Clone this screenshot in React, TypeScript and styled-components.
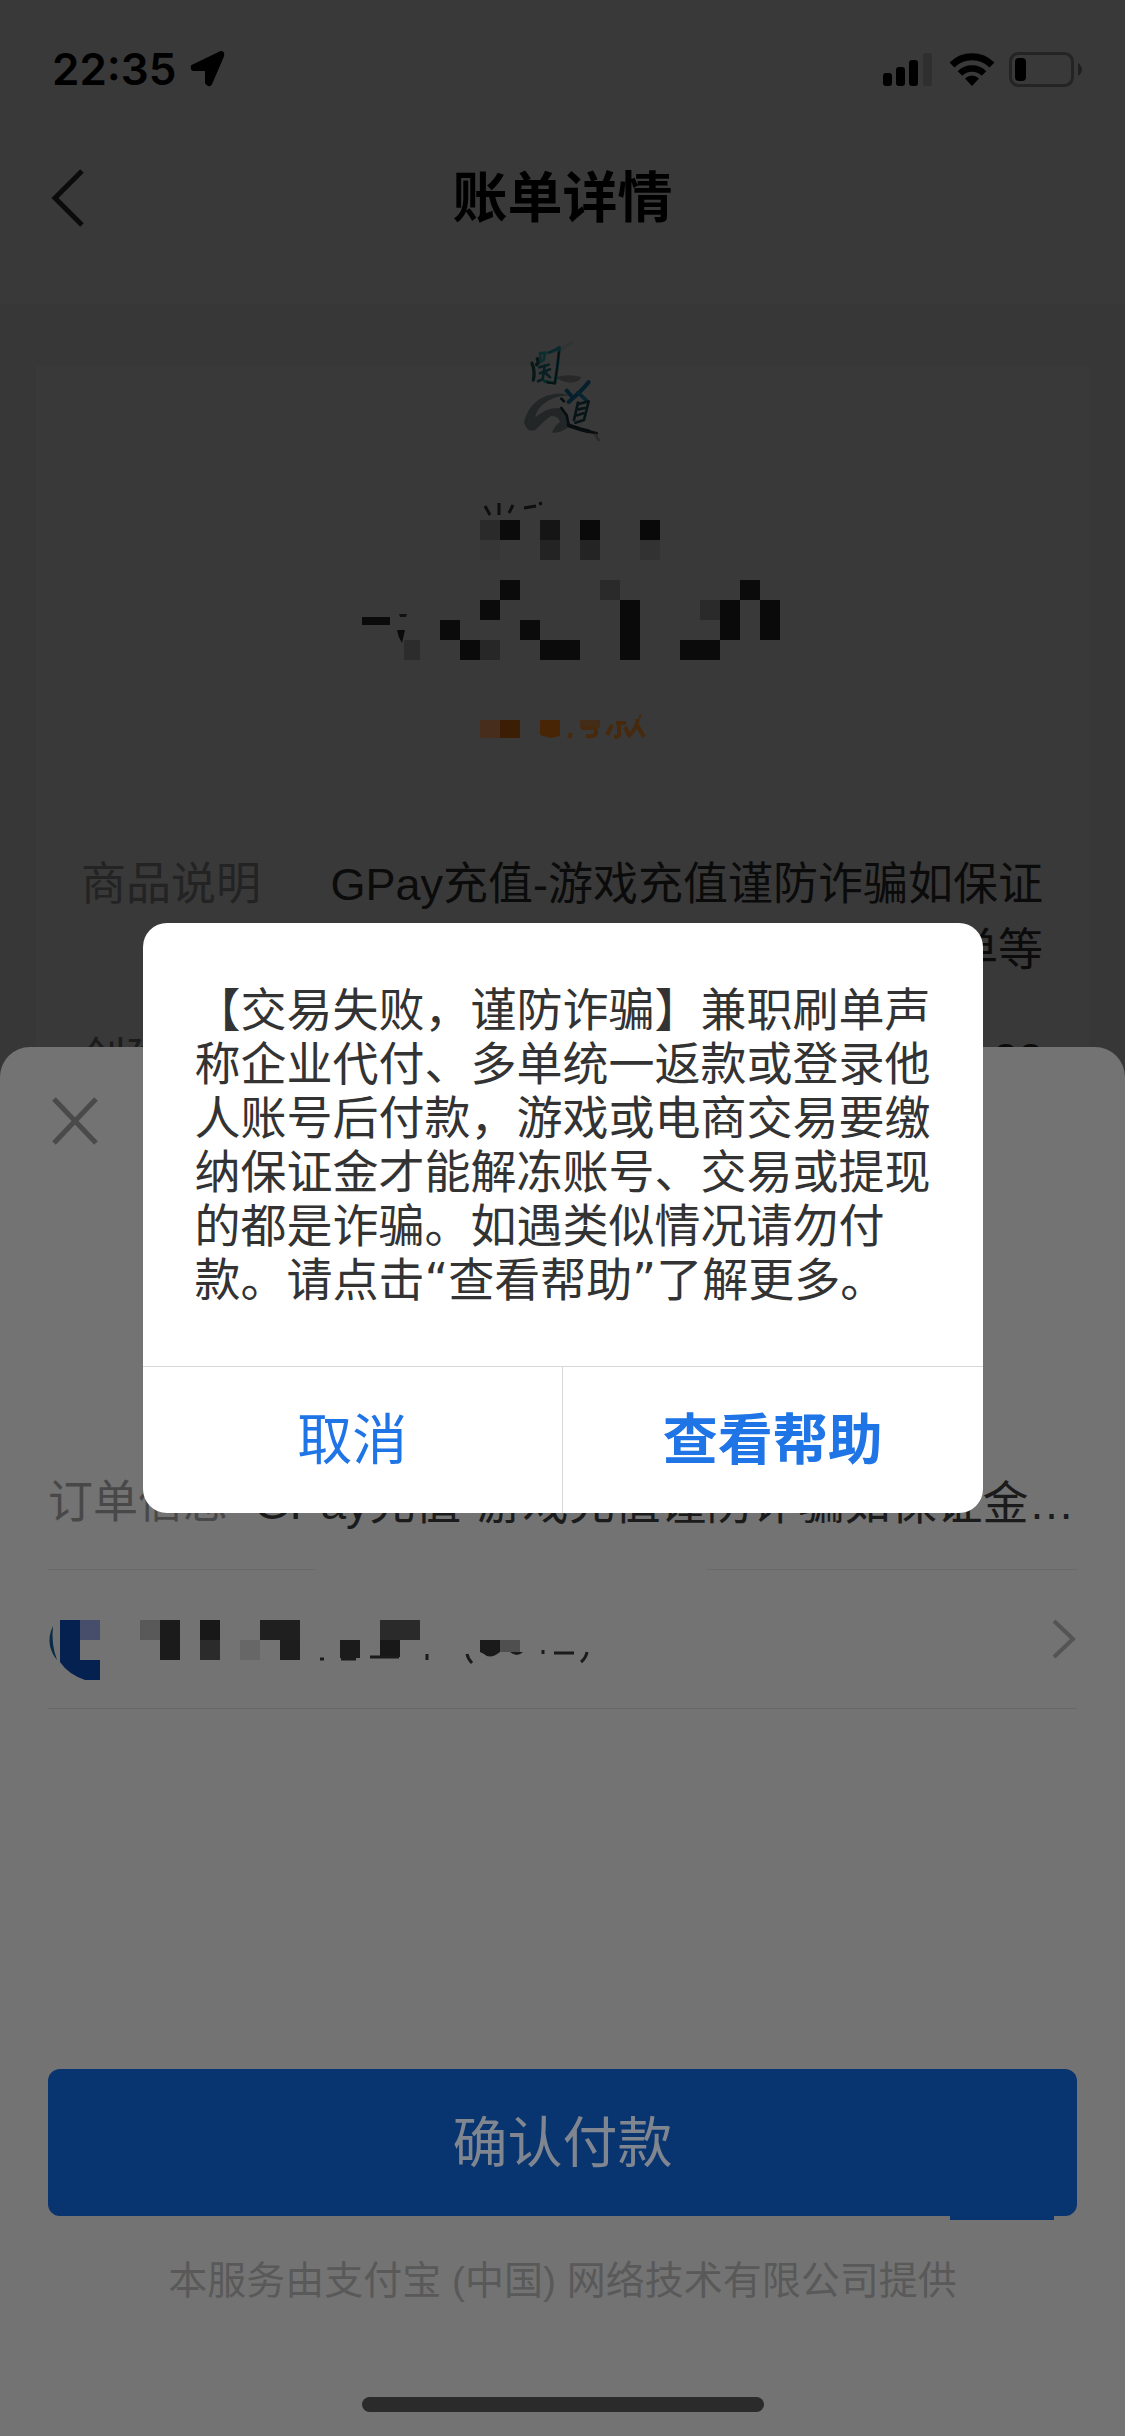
import React from "react";
import styled, { createGlobalStyle } from "styled-components";

const GlobalStyle = createGlobalStyle`
  *, *::before, *::after { box-sizing: border-box; }
  html, body { margin: 0; padding: 0; }
  body {
    background: #373737;
    font-family: "Liberation Sans", "Noto Sans CJK SC", sans-serif;
    overflow: hidden;
  }
  button {
    margin: 0;
    padding: 0;
    border: 0;
    background: none;
    font-family: inherit;
    cursor: pointer;
  }
  h1, p, dl, dt, dd { margin: 0; }
  svg { display: block; flex: none; }
`;

const Screen = styled.div`
  position: relative;
  height: 100vh;
  overflow: hidden;
  background: #373737;
`;

const TopArea = styled.header`
  background: #393939;
  padding-bottom: 46px;
`;

const StatusBar = styled.div`
  display: flex;
  align-items: center;
  justify-content: space-between;
  height: 138px;
  padding: 0 42px 0 52px;
`;

const StatusGroup = styled.div<{ $gap: number }>`
  display: flex;
  align-items: center;
  gap: ${(p) => p.$gap}px;
`;

const Clock = styled.span`
  font-family: Inter, sans-serif;
  font-size: 44px;
  font-weight: 600;
  line-height: 48px;
  color: #000;
`;

const NavBar = styled.div`
  display: grid;
  grid-template-columns: 120px 1fr 120px;
  align-items: center;
  height: 120px;
`;

const IconButton = styled.button<{ $pad: number }>`
  display: flex;
  padding-left: ${(p) => p.$pad}px;
`;

const Title = styled.h1`
  font-size: 55px;
  line-height: 66px;
  font-weight: 700;
  text-align: center;
  color: #000;
`;

const BillCard = styled.main`
  display: flex;
  flex-direction: column;
  align-items: center;
  margin: 62px 36px 0;
  padding: 0 46px 0 45px;
  height: 100%;
  background: #393939;
`;

const Hero = styled.div`
  display: flex;
  flex-direction: column;
  align-items: center;
  margin-top: -36px;
  margin-bottom: 107px;
`;

const MaskStack = styled.div`
  display: flex;
  flex-direction: column;
  gap: 20px;
  margin-top: 50px;
`;

const StatusMask = styled.div`
  margin-top: 25px;
`;

const Details = styled.dl`
  align-self: stretch;
  display: flex;
  flex-direction: column;
  gap: 43px;
`;

const DetailRow = styled.div`
  display: flex;
  gap: 48px;
  font-size: 45px;
  line-height: 66px;
`;

const DetailLabel = styled.dt<{ $strong?: boolean }>`
  flex: none;
  color: ${(p) => (p.$strong ? "#1c1c1c" : "#232323")};
`;

const DetailValue = styled.dd`
  flex: 1;
  text-align: right;
  color: #0b0b0b;
`;

const Sheet = styled.section`
  position: absolute;
  left: 0;
  right: 0;
  bottom: 0;
  padding: 50px 48px 24px;
  border-radius: 30px 30px 0 0;
  background: #737373;
`;

const OrderRow = styled.div`
  display: flex;
  gap: 26px;
  margin-top: 325px;
  height: 66px;
  font-size: 46px;
  line-height: 66px;
  white-space: nowrap;
`;

const OrderLabel = styled.span`
  font-size: 45px;
  color: #484848;
`;

const OrderValue = styled.span`
  color: #1b1b1b;
`;

const PartialRule = styled.div`
  height: 1px;
  margin-top: 33px;
  background: linear-gradient(
    90deg,
    #6a6a6a 0 26%,
    transparent 26% 64%,
    #6a6a6a 64% 100%
  );
`;

const PayMethod = styled.button`
  display: flex;
  align-items: center;
  justify-content: space-between;
  width: 100%;
  height: 139px;
  border-bottom: 1px solid #686868;
`;

const ConfirmButton = styled.button`
  position: relative;
  display: block;
  width: 100%;
  height: 147px;
  margin-top: 360px;
  border-radius: 12px;
  background: #083470;
  color: #808690;
  font-size: 55px;
  line-height: 66px;

  &::after {
    content: "";
    position: absolute;
    right: 23px;
    bottom: -4px;
    width: 104px;
    height: 4px;
    background: #083470;
  }
`;

const Provider = styled.p`
  margin-top: 38px;
  font-size: 39px;
  line-height: 54px;
  text-align: center;
  color: #595959;
`;

const HomeIndicator = styled.div`
  width: 402px;
  height: 15px;
  margin: 89px auto 0;
  border-radius: 8px;
  background: #2b2b2b;
`;

const DialogLayer = styled.div`
  position: absolute;
  inset: 0;
  display: flex;
  align-items: center;
  justify-content: center;
`;

const Dialog = styled.div`
  width: 840px;
  border-radius: 24px;
  background: #fff;
  overflow: hidden;
`;

const DialogText = styled.p`
  padding: 60px 52px 59px;
  font-family: "DejaVu Sans", "Noto Sans CJK SC", sans-serif;
  font-size: 46px;
  line-height: 54px;
  color: #333;
`;

const DialogActions = styled.div`
  display: flex;
  border-top: 1px solid #d8d8d8;
`;

const DialogButton = styled.button<{ $primary?: boolean }>`
  flex: 1;
  height: 146px;
  font-size: 55px;
  line-height: 66px;
  font-weight: ${(p) => (p.$primary ? 700 : 400)};
  color: #1f74e6;

  & + & {
    border-left: 1px solid #d8d8d8;
  }
`;

type Cell = [number, number, number, number, string];

const Mosaic = ({ cells }: { cells: Cell[] }) => (
  <>
    {cells.map(([x, y, w, h, fill], i) => (
      <rect key={i} x={x} y={y} width={w} height={h} fill={fill} />
    ))}
  </>
);

const nameCells: Cell[] = [
  [138, 20, 20, 20, "#2a2a2a"],
  [158, 20, 20, 20, "#0b0b0b"],
  [138, 40, 20, 20, "#363636"],
  [198, 20, 20, 20, "#151515"],
  [198, 40, 20, 20, "#232323"],
  [238, 20, 20, 20, "#0a0a0a"],
  [238, 40, 20, 20, "#242424"],
  [298, 20, 20, 20, "#090909"],
  [298, 40, 20, 20, "#323232"],
];

const amountCells: Cell[] = [
  [20, 37, 28, 8, "#0b0b0b"],
  [62, 60, 16, 20, "#2c2c2c"],
  [158, 0, 20, 20, "#0b0b0b"],
  [138, 20, 20, 20, "#0b0b0b"],
  [98, 40, 20, 20, "#0b0b0b"],
  [118, 60, 20, 20, "#0a0a0a"],
  [138, 60, 20, 20, "#272727"],
  [178, 40, 20, 20, "#0b0b0b"],
  [198, 60, 40, 20, "#0b0b0b"],
  [258, 0, 20, 20, "#2a2a2a"],
  [278, 20, 20, 60, "#0a0a0a"],
  [338, 60, 40, 20, "#0b0b0b"],
  [358, 20, 20, 20, "#2a2a2a"],
  [378, 20, 20, 40, "#0a0a0a"],
  [398, 0, 20, 20, "#0b0b0b"],
  [418, 20, 20, 40, "#0a0a0a"],
];

const bankCells: Cell[] = [
  [12, 0, 20, 40, "#05214f"],
  [32, 0, 20, 20, "#474e6b"],
  [92, 0, 20, 20, "#595959"],
  [112, 0, 20, 40, "#1b1b1b"],
  [152, 0, 20, 20, "#181818"],
  [152, 20, 20, 20, "#2b2b2b"],
  [192, 20, 20, 20, "#676767"],
  [212, 0, 40, 20, "#1f1f1f"],
  [232, 20, 20, 20, "#1d1d1d"],
  [292, 20, 20, 18, "#1b1b1b"],
  [332, 0, 40, 20, "#2a2a2a"],
  [332, 20, 20, 17, "#181818"],
  [452, 20, 20, 12, "#4f4f4f"],
];

const BackIcon = () => (
  <svg width="34" height="58" viewBox="0 0 34 58" fill="none">
    <path d="M31 2 L4 29 L31 56" stroke="#0b0b0b" strokeWidth="5" />
  </svg>
);

const LocationIcon = () => (
  <svg width="36" height="38" viewBox="0 0 36 38">
    <path
      d="M32 2 L3 16 Q2 20 5 20 L17 20 L17 33 Q20 37 22 34 L34 6 Q35 2 32 2Z"
      stroke="#000"
      strokeWidth="2"
      strokeLinejoin="round"
    />
  </svg>
);

const SignalIcon = () => (
  <svg width="52" height="34" viewBox="0 0 52 34">
    <rect x="0" y="21" width="9" height="13" rx="3" />
    <rect x="13" y="15" width="9" height="19" rx="3" />
    <rect x="26" y="8" width="9" height="26" rx="3" />
    <rect x="40" y="1" width="9" height="33" rx="3" fill="#2f2f2f" />
  </svg>
);

const WifiIcon = () => (
  <svg width="46" height="34" viewBox="0 0 46 34" fill="none" stroke="#000">
    <path d="M3 13 A28.500 28.500 0 0 1 43 13" strokeWidth="7" />
    <path d="M11 21.500 A17 17 0 0 1 35 21.500" strokeWidth="6.500" />
    <path d="M23 34 L16 26.500 Q23 20.500 30 26.500Z" fill="#000" stroke="none" />
  </svg>
);

const BatteryIcon = () => (
  <svg width="74" height="35" viewBox="0 0 74 35">
    <rect x="1.500" y="1.500" width="62" height="32" rx="8" fill="none" stroke="#242424" strokeWidth="3" />
    <rect x="6" y="6" width="11" height="23" rx="4" fill="#000" />
    <path d="M69 11 Q73 14 73 17.500 Q73 21 69 24Z" fill="#202020" />
  </svg>
);

const MerchantLogo = () => (
  <svg width="110" height="120" viewBox="-9 0 330 360" fill="none" strokeLinecap="round" strokeLinejoin="round">
    <path d="M136 142 Q180 130 214 142 Q208 158 178 158 Q160 156 142 146Z" fill="#282828" />
    <path d="M152 58 Q174 44 184 38" stroke="#313333" strokeWidth="8" />
    <path
      d="M42 278 Q54 220 108 198 Q146 184 178 196 Q128 198 100 222 Q78 240 76 262 Q110 232 148 234 Q172 248 176 290 Q158 308 126 308 Q136 284 150 276 Q146 256 122 258 Q98 276 76 300 Q52 308 42 278Z"
      fill="#222627"
    />
    <path d="M66 100 Q76 124 70 150 M82 86 Q88 98 80 104" stroke="#091717" strokeWidth="10" />
    <path d="M92 92 L90 70 L106 68 L101 90 L92 96" stroke="#0c2e2e" strokeWidth="8" />
    <path d="M116 68 Q132 64 148 52 Q144 104 135 160 L104 154" stroke="#08292b" strokeWidth="9" />
    <path d="M147 66 Q141 120 134 160 L112 158" stroke="#061010" strokeWidth="5" />
    <path d="M88 112 L116 104 M90 130 L120 118 M104 106 L98 148 L84 154 M104 126 L120 142" stroke="#082022" strokeWidth="8" />
    <path d="M170 182 L190 204 M236 156 Q218 180 176 216" stroke="#061f2c" strokeWidth="12" />
    <path d="M204 188 L228 210" stroke="#062432" strokeWidth="11" />
    <path d="M204 218 L192 270 M206 222 L236 214 L222 270 L196 278 M206 238 L224 234 M202 256 L220 250" stroke="#071418" strokeWidth="8" />
    <path d="M154 206 L162 214 M154 234 L170 256 L176 286 L212 298 L260 310" stroke="#080d0f" strokeWidth="8" />
    <path d="M176 286 L212 298 L236 304" stroke="#080d0f" strokeWidth="12" />
    <path d="M256 314 L266 330" stroke="#2b2b2b" strokeWidth="8" />
  </svg>
);

const MaskedName = () => (
  <svg width="440" height="60" viewBox="0 0 440 60" fill="none">
    <path d="M143 6 L148 15 M157 3 V15 M171 5 L167 13 M182 8 L194 6 M197 4 L200 3" stroke="#0e0e0e" strokeWidth="3" />
    <Mosaic cells={nameCells} />
  </svg>
);

const MaskedAmount = () => (
  <svg width="440" height="80" viewBox="0 0 440 80">
    <path d="M55 50 H63 L60 63 Q56 57 55 50Z" fill="#0b0b0b" />
    <path d="M57 34 H65 L64 37 H58Z" fill="#111" />
    <Mosaic cells={amountCells} />
  </svg>
);

const MaskedStatus = () => (
  <svg width="440" height="40" viewBox="0 0 440 40" fill="none">
    <rect x="138" y="15" width="20" height="18" fill="#472d1c" />
    <rect x="158" y="15" width="20" height="18" fill="#3c1e05" />
    <path d="M198 15 H218 V31 L209 33 L198 30Z" fill="#472505" />
    <rect x="238" y="15" width="20" height="8" fill="#432d18" />
    <path
      d="M229 28 L227 33 M239 23 H253 M254 23 V28 Q253 32 244 31 M270 20 L265 30 M274 18 H284 M277 18 V30 Q276 32 272 32 M283 22 L287 30 M296 14 Q294 25 286 32 M295 20 L302 32 M297 11 L299 12"
      stroke="#472a0e"
      strokeWidth="4"
    />
  </svg>
);

const MaskedBank = () => (
  <svg width="560" height="82" viewBox="0 -22 560 82" fill="none">
    <path d="M5 6 Q0 16 2 26 Q4 34 9 40 Q3 24 5 6Z" fill="#082c48" />
    <path d="M12 38 L32 38 V40 H52 V60 H37 Q20 54 12 42Z" fill="#05214f" />
    <Mosaic cells={bankCells} />
    <path d="M432 20 H452 V32 Q442 40 436 34 L432 32Z" fill="#1a1a1a" />
    <path d="M462 32 H475 Q469 38 462 32Z" fill="#1b1b1b" />
    <path
      d="M272 39 H276 M293 39 H308 M322 37 H351 M379 34 V40 M419 34 Q420 39 424 43 M495 30 V34 M506 33 H526 M539 32 Q538 38 533 42"
      stroke="#1b1b1b"
      strokeWidth="3"
    />
  </svg>
);

const CloseIcon = () => (
  <svg width="46" height="48" viewBox="0 0 46 48" fill="none">
    <path d="M2 2 L44 46 M44 2 L2 46" stroke="#4a4a4a" strokeWidth="5" />
  </svg>
);

const ForwardIcon = () => (
  <svg width="26" height="40" viewBox="0 0 26 40" fill="none">
    <path d="M3 2 L22 20 L3 38" stroke="#545454" strokeWidth="4" />
  </svg>
);

export default function App() {
  return (
    <>
      <GlobalStyle />
      <Screen>
        <TopArea>
          <StatusBar>
            <StatusGroup $gap={12}>
              <Clock>22:35</Clock>
              <LocationIcon />
            </StatusGroup>
            <StatusGroup $gap={14}>
              <SignalIcon />
              <WifiIcon />
              <BatteryIcon />
            </StatusGroup>
          </StatusBar>
          <NavBar>
            <IconButton type="button" aria-label="返回" $pad={51}>
              <BackIcon />
            </IconButton>
            <Title>账单详情</Title>
          </NavBar>
        </TopArea>

        <BillCard>
          <Hero>
            <MerchantLogo />
            <MaskStack>
              <MaskedName />
              <MaskedAmount />
              <StatusMask>
                <MaskedStatus />
              </StatusMask>
            </MaskStack>
          </Hero>
          <Details>
            <DetailRow>
              <DetailLabel>商品说明</DetailLabel>
              <DetailValue>GPay充值-游戏充值谨防诈骗如保证金刷单等</DetailValue>
            </DetailRow>
            <DetailRow>
              <DetailLabel $strong>创建时间</DetailLabel>
              <DetailValue>22:34:22</DetailValue>
            </DetailRow>
          </Details>
        </BillCard>

        <Sheet>
          <IconButton type="button" aria-label="关闭" $pad={4}>
            <CloseIcon />
          </IconButton>
          <OrderRow>
            <OrderLabel>订单信息</OrderLabel>
            <OrderValue>GPay充值-游戏充值谨防诈骗如保证金…</OrderValue>
          </OrderRow>
          <PartialRule />
          <PayMethod type="button" aria-label="付款方式">
            <MaskedBank />
            <ForwardIcon />
          </PayMethod>
          <ConfirmButton type="button">确认付款</ConfirmButton>
          <Provider>本服务由支付宝 (中国) 网络技术有限公司提供</Provider>
          <HomeIndicator />
        </Sheet>

        <DialogLayer>
          <Dialog role="alertdialog" aria-modal="true">
            <DialogText>
              【交易失败，谨防诈骗】兼职刷单声称企业代付、多单统一返款或登录他人账号后付款，游戏或电商交易要缴纳保证金才能解冻账号、交易或提现的都是诈骗。如遇类似情况请勿付款。请点击“查看帮助”了解更多。
            </DialogText>
            <DialogActions>
              <DialogButton type="button">取消</DialogButton>
              <DialogButton type="button" $primary>
                查看帮助
              </DialogButton>
            </DialogActions>
          </Dialog>
        </DialogLayer>
      </Screen>
    </>
  );
}
